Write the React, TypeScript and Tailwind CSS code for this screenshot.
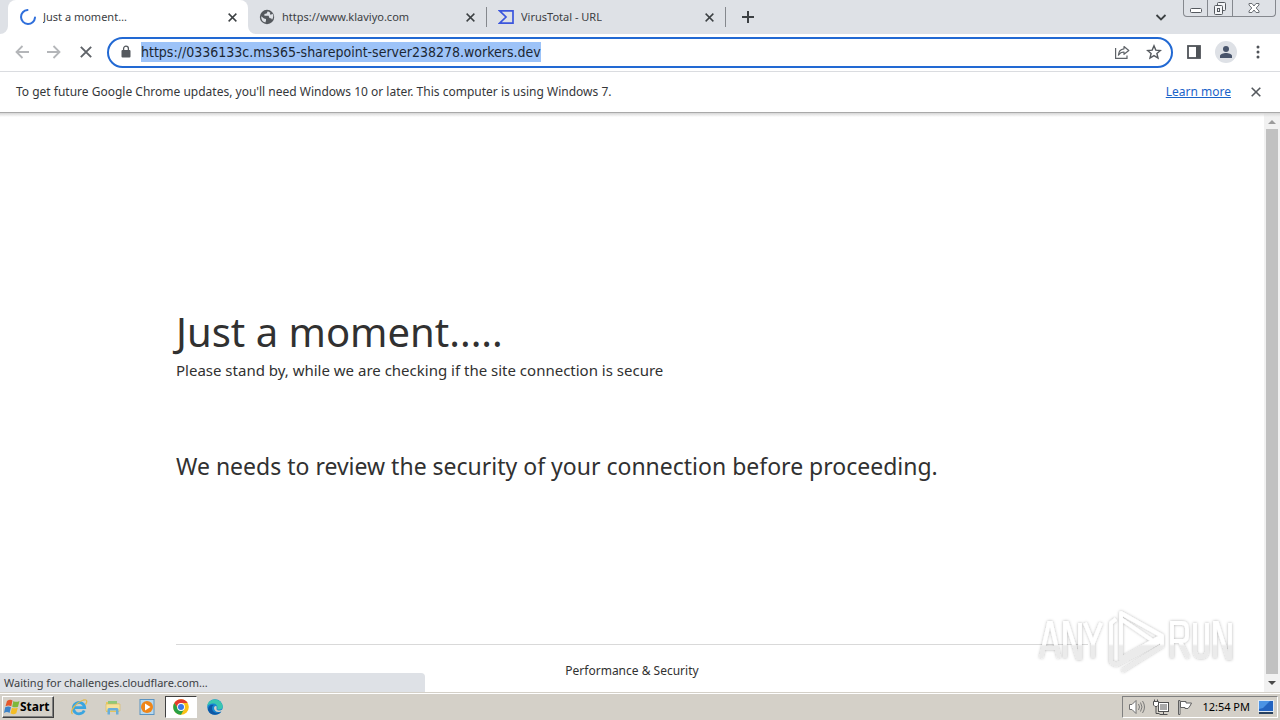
import React from "react";

type IconProps = { className?: string };

const Cross = ({ className = "" }: IconProps) => (
  <svg viewBox="0 0 10 10" className={className} fill="none" stroke="currentColor" strokeWidth="1.6" aria-hidden="true">
    <path d="M.7 .7 9.300 9.300M9.300 .7 .7 9.300" />
  </svg>
);

const Spinner = () => (
  <svg viewBox="0 0 16 16" className="size-4" fill="none" stroke="#2f6fdb" strokeWidth="2" strokeLinecap="round" aria-hidden="true">
    <path d="M7.5 1A7 7 0 1 0 15 8.6" />
  </svg>
);

const Globe = () => (
  <svg viewBox="0 0 16 16" className="size-4" aria-hidden="true">
    <circle cx="8" cy="8" r="7.2" fill="#54585d" />
    <path d="M2.2 7.2 5 9.6 7 10v1.6l-.6 1.8C3.6 12.8 2 10.6 2.2 7.2Z" fill="#dee1e6" />
    <path d="M8.8 2.2 7.6 4.4 5.4 5v1.8h4.2l.8 2.2 2 .4.6 1.4c1.4-1.800 1.700-4 .6-6l-1.800 1-1-.8.6-1.200Z" fill="#dee1e6" />
  </svg>
);

const VirusTotal = () => (
  <svg viewBox="0 0 16 16" className="size-4" fill="none" stroke="#3b56dd" strokeWidth="1.700" aria-hidden="true">
    <path d="M1.600 1.900H15v12.200H1.600L8 8Z" />
  </svg>
);

const tabs = [
  { title: "Just a moment…", icon: <Spinner />, active: true },
  { title: "https://www.klaviyo.com", icon: <Globe />, active: false },
  { title: "VirusTotal - URL", icon: <VirusTotal />, active: false },
];

function TabStrip() {
  return (
    <div className="flex h-[34px] bg-[#dee1e6] pl-2 text-[#3c4043]">
      <div role="tablist" className="flex">
        {tabs.map((t) => (
          <div
            key={t.title}
            className={
              t.active
                ? "relative flex w-60 items-center rounded-t-lg bg-white pl-3 pr-[11px]"
                : "flex w-[239px] items-center pl-[11px] pr-[10px]"
            }
          >
            {t.active && (
              <svg viewBox="0 0 256 8" className="absolute -left-2 bottom-0 h-2 w-64" fill="#fff" aria-hidden="true">
                <path d="M0 8A8 8 0 0 0 8 0V8ZM256 8A8 8 0 0 1 248 0V8Z" />
              </svg>
            )}
            <button role="tab" aria-selected={t.active} className="flex min-w-0 flex-1 items-center gap-[7px] text-left text-[11px] leading-4">
              {t.icon}
              <span className="truncate">{t.title}</span>
            </button>
            <button aria-label={"Close " + t.title} className="flex size-[9px] items-center justify-center">
              <Cross className="size-[9px]" />
            </button>
            {!t.active && <span className="ml-[11px] -mr-[10px] h-5 w-px bg-[#85888d]" />}
          </div>
        ))}
      </div>
      <button aria-label="New tab" className="ml-4 flex w-3 items-center">
        <svg viewBox="0 0 12 12" className="size-3" stroke="#3c4043" strokeWidth="2" aria-hidden="true">
          <path d="M6 0V12M0 6H12" />
        </svg>
      </button>
      <div className="ml-auto flex items-start pr-1">
        <button aria-label="Search tabs" className="mr-4 flex h-[34px] w-3 items-center">
          <svg viewBox="0 0 12 12" className="size-3" fill="none" stroke="#3c4043" strokeWidth="1.800" aria-hidden="true">
            <path d="M1.500 4 6 8.400 10.500 4" />
          </svg>
        </button>
        <div className="flex h-[17px] divide-x divide-[#85888e] rounded-b border border-t-0 border-[#85888e]">
          <button aria-label="Minimize" className="flex w-6 justify-center">
            <svg viewBox="0 0 12 16" className="h-4 w-3" fill="#fff" stroke="#55595f" aria-hidden="true">
              <rect x=".5" y="8.500" width="11" height="4" rx="1" />
            </svg>
          </button>
          <button aria-label="Restore" className="flex w-[25px] justify-center">
            <svg viewBox="0 0 14 16" className="h-4 w-[14px]" fill="#f4f5f7" stroke="#55595f" aria-hidden="true">
              <rect x="4.500" y="2.500" width="8" height="8" rx="1" />
              <rect x="1.500" y="5.500" width="8" height="9" rx="1" />
              <rect x="4.500" y="8.500" width="2" height="3" />
            </svg>
          </button>
          <button aria-label="Close" className="flex w-[42px] justify-center">
            <svg viewBox="0 0 12 16" className="h-4 w-3" fill="#fff" stroke="#6b6f75" strokeLinejoin="round" aria-hidden="true">
              <path d="M1 3.500H4L6 6 8 3.500H11V5L8.200 8 11 11V12.500H8L6 10 4 12.500H1V11L3.800 8 1 5Z" />
            </svg>
          </button>
        </div>
      </div>
    </div>
  );
}

const Arrow = ({ className = "" }: IconProps) => (
  <svg viewBox="0 0 14 14" className={"size-[14px] " + className} fill="none" stroke="#b4b6b9" strokeWidth="1.800" aria-hidden="true">
    <path d="M14 7H1.500M7.500 1 1.500 7 7.500 13" />
  </svg>
);

function Toolbar() {
  return (
    <div className="flex h-[38px] items-center border-b border-[#dadce0] bg-white pb-px pl-[15px] pr-4">
      <button aria-label="Back"><Arrow /></button>
      <button aria-label="Forward" className="ml-[18px]"><Arrow className="rotate-180" /></button>
      <button aria-label="Stop" className="ml-[19px] text-[#5f6368]"><Cross className="size-3" /></button>
      <form className="ml-[15px] flex h-[31px] flex-1 items-center rounded-full border-2 border-[#2269d3] pl-3 pr-[9px]">
        <svg viewBox="0 0 10 14" className="h-[14px] w-[10px]" aria-hidden="true">
          <rect x=".5" y="5" width="9" height="7.500" rx="1" fill="#55595e" />
          <path d="M2.600 5.500V3.600a2.400 2.400 0 0 1 4.800 0V5.500" fill="none" stroke="#55595e" strokeWidth="1.300" />
        </svg>
        <input
          aria-label="Address"
          defaultValue="https://0336133c.ms365-sharepoint-server238278.workers.dev"
          className="ml-[10px] h-5 field-sizing-content bg-[#9dc3f8] font-['DejaVu_Sans_Condensed','DejaVu_Sans',sans-serif] text-[14px] leading-5 text-[#1b2733] outline-none"
        />
        <button type="button" aria-label="Share" className="ml-auto">
          <svg viewBox="0 0 16 16" className="size-4" fill="none" stroke="#5f6368" strokeWidth="1.200" aria-hidden="true">
            <path d="M1.600 4V14.400H13V11.500" />
            <path d="M10 2.500 14.800 6.500 10 10.300V8C7.500 8 5.800 9 4.400 11.200 4.600 7.400 6.800 5.200 10 4.800Z" strokeLinejoin="round" />
          </svg>
        </button>
        <button type="button" aria-label="Bookmark" className="ml-4">
          <svg viewBox="0 0 16 16" className="size-4" fill="none" stroke="#55595e" strokeWidth="1.400" aria-hidden="true">
            <path d="M8 1.800 9.800 6.100 14.400 6.500 10.900 9.500 12 14 8 11.600 4 14 5.100 9.500 1.600 6.500 6.200 6.100Z" />
          </svg>
        </button>
      </form>
      <button aria-label="Side panel" className="ml-[14px]">
        <svg viewBox="0 0 14 14" className="size-[14px]" aria-hidden="true">
          <rect x="1" y="1" width="12" height="12" fill="none" stroke="#4f5358" strokeWidth="1.800" />
          <rect x="9" y="1" width="4" height="12" fill="#4f5358" />
        </svg>
      </button>
      <button aria-label="Profile" className="ml-[14px] flex size-[22px] items-center justify-center rounded-full bg-[#dee1e6]">
        <svg viewBox="0 0 14 14" className="size-[14px]" fill="#48546b" aria-hidden="true">
          <circle cx="7" cy="4" r="3" />
          <path d="M1 13V11C1 9 4.500 8 7 8S13 9 13 11V13Z" />
        </svg>
      </button>
      <button aria-label="Menu" className="ml-[15px]">
        <svg viewBox="0 0 12 14" className="h-[14px] w-3" fill="#4f5358" aria-hidden="true">
          <circle cx="6" cy="2" r="1.500" />
          <circle cx="6" cy="7" r="1.500" />
          <circle cx="6" cy="12" r="1.500" />
        </svg>
      </button>
    </div>
  );
}

function InfoBar() {
  return (
    <div className="flex h-10 items-center bg-white pl-4 pr-[19px] text-[12px] leading-4 text-[#35373a]">
      <p>To get future Google Chrome updates, you'll need Windows 10 or later. This computer is using Windows 7.</p>
      <a href="#update" className="ml-auto text-[#1a63c9] underline">Learn more</a>
      <button aria-label="Dismiss" className="ml-5 text-[#55595e]"><Cross className="size-[10px]" /></button>
    </div>
  );
}

function Watermark() {
  return (
    <svg viewBox="0 0 216 72" className="pointer-events-none absolute bottom-[15px] right-9 h-[72px] w-[216px]" role="img" aria-label="ANY RUN">
      <defs>
        <filter id="halo" x="-10%" y="-20%" width="120%" height="140%">
          <feDropShadow dx="0" dy="0" stdDeviation="1.700" floodColor="#000" floodOpacity=".3" />
        </filter>
        <linearGradient id="fade" gradientUnits="userSpaceOnUse" x1="0" y1="0" x2="0" y2="72">
          <stop offset=".54" stopColor="#fff" />
          <stop offset=".57" stopColor="#ebebeb" />
        </linearGradient>
      </defs>
      <g filter="url(#halo)" fill="none" stroke="url(#fade)" strokeWidth="3.800">
        <path d="M13 53 21 18H23L31 53M15 43H29M37 53V18H39L50 53H52V18M57 18 65 38V53M73 18 65 38" />
        <path d="M144 53V18H154Q159 18 159 24V31Q159 36 154 36H144M152 36 160 53M167 18V46Q167 52 173 52T179 46V18M187 53V18H189L200 53H202V18" />
        <path d="M83 58V18L88 14M88 60 83 57M93 44V8L134 31 93 54V44M93 14 128 38M88 60 134 35M94 66 134 41V31" strokeLinejoin="round" />
      </g>
    </svg>
  );
}

function Page() {
  return (
    <div className="relative flex flex-1 border-t border-[#a9a9a9] bg-white">
      <div className="pointer-events-none absolute inset-x-0 top-0 h-1 bg-linear-to-b from-[#d6d6d6] to-transparent" />
      <main className="flex-1 text-[#313131]">
        <div className="mx-auto flex h-full max-w-[912px] flex-col">
          <h1 className="pt-[192px] text-[40px] leading-[54px]">Just a moment.....</h1>
          <p className="text-[15px] leading-[22px]">Please stand by, while we are checking if the site connection is secure</p>
          <h2 className="mt-[67px] text-[23px] leading-9">We needs to review the security of your connection before proceeding.</h2>
          <footer className="mt-auto mb-[13px] border-t border-[#d9d9d9] pt-[18px] text-center text-[12px] leading-4">
            Performance &amp; Security
          </footer>
        </div>
      </main>
      <div className="flex w-4 flex-col items-center bg-[#f1f1f1]" aria-hidden="true">
        <svg viewBox="0 0 16 16" className="size-4" fill="#9b9b9b"><path d="M4 11 8 7 12 11Z" /></svg>
        <div className="w-3 flex-1 bg-[#c1c1c1]" />
        <svg viewBox="0 0 16 18" className="h-[18px] w-4" fill="#4a4a4a"><path d="M4 7H12L8 11Z" /></svg>
      </div>
      <Watermark />
      <p className="absolute bottom-0 left-0 flex h-[19px] w-[425px] items-center rounded-tr bg-[#dee1e6] pl-1 text-[11px] leading-4 text-[#3c4043]">
        Waiting for challenges.cloudflare.com…
      </p>
    </div>
  );
}

const IeIcon = () => (
  <svg viewBox="0 0 18 18" className="size-[18px]" fill="none" aria-hidden="true">
    <path d="M14.200 12.500A5.700 5.700 0 1 1 14.700 9.700H4.500" stroke="#3aa5e0" strokeWidth="2.800" />
    <path d="M2.500 16C-1 13.500 6 4.500 13.500 2 18 1 17 4.500 15.500 6.500" stroke="#dfb951" strokeWidth="1.300" />
  </svg>
);

const FolderIcon = () => (
  <svg viewBox="0 0 18 18" className="size-[18px]" aria-hidden="true">
    <path d="M2 4H8L9 5.500H15V14H2Z" fill="#e8c860" />
    <path d="M4 3H13V8H4Z" fill="#8fc878" />
    <path d="M2 6H16V13H2Z" fill="#f6e19a" stroke="#d9b85b" strokeWidth=".6" />
    <path d="M3.500 16.500V11.500Q3.500 10 5 10H13Q14.500 10 14.500 11.500V16.500H12V12.500H6V16.500Z" fill="#69aeda" />
  </svg>
);

const PlayerIcon = () => (
  <svg viewBox="0 0 18 18" className="size-[18px]" aria-hidden="true">
    <rect x="2" y="1.500" width="14" height="15" fill="#b7d8ee" stroke="#5b94c2" />
    <circle cx="9" cy="9" r="6" fill="#ef8518" />
    <path d="M7 5.500 12.500 9 7 12.500Z" fill="#fff" />
  </svg>
);

const ChromeIcon = () => (
  <svg viewBox="0 0 16 16" className="size-4" aria-hidden="true">
    <circle cx="8" cy="8" r="7.800" fill="#fbc116" />
    <path d="M1.250 4.100A7.800 7.800 0 0 1 14.750 4.100H8L5 9.500Z" fill="#e33b2e" />
    <path d="M1.250 4.100A7.800 7.800 0 0 0 8 15.800L11.200 9.900 5 9.500Z" fill="#29a045" />
    <circle cx="8" cy="8" r="3.900" fill="#fff" />
    <circle cx="8" cy="8" r="3" fill="#3a78e7" />
  </svg>
);

const EdgeIcon = () => (
  <svg viewBox="0 0 16 16" className="size-4" aria-hidden="true">
    <circle cx="8" cy="8" r="7.800" fill="#1787d2" />
    <path d="M.3 7C1-1.500 14-2 15.700 7 16 10 13 11 10 10.500 11.500 7 9 4 6 4.500 3 4.500 1 6 .3 7Z" fill="#3ac6b0" />
    <path d="M5 9C5 13 9 15 14 13 11 17 3 17 1 11 1 7 4 5 7 6 5.500 6.500 5 8 5 9Z" fill="#0d57a5" />
    <path d="M9.500 7.500C10 9 9 10 10 11 12 12 14.500 11.500 16 10V12L14 12.500C10 14 7 12 7 9 7 7.500 9 6.500 9.500 7.500Z" fill="#d4d0c8" />
  </svg>
);

const quickLaunch = [
  { name: "Internet Explorer", icon: <IeIcon />, active: false },
  { name: "Explorer", icon: <FolderIcon />, active: false },
  { name: "Media Player", icon: <PlayerIcon />, active: false },
  { name: "Chrome", icon: <ChromeIcon />, active: true },
  { name: "Edge", icon: <EdgeIcon />, active: false },
];

function Taskbar() {
  return (
    <div className="flex h-7 items-center border-t border-[#d4d0c8] bg-[#d4d0c8] px-[2px] shadow-[inset_0_1px_0_#fff]">
      <button className="mt-px flex h-[22px] w-[52px] items-center border border-white border-b-[#404040] border-r-[#404040] pl-px text-[12px] font-bold leading-4 text-black shadow-[inset_-1px_-1px_0_#808080]">
        <svg viewBox="0 0 16 16" className="size-4 shrink-0" aria-hidden="true">
          <path d="M3 2Q6 0 8.500 1.500L7.300 7.300Q4.500 5.500 1.500 7.300Z" fill="#e4572b" />
          <path d="M9.400 2Q12 3.700 15.500 2L14 7.700Q11 9 8.200 7.700Z" fill="#7db83a" />
          <path d="M1.200 8.300Q4.500 6.500 7 8.300L5.500 14Q3 12 0 14Z" fill="#3c83c9" />
          <path d="M8 8.700Q10.500 10 13.800 8.700L12.300 14.300Q9.500 16 6.500 14.300Z" fill="#f4bd26" />
        </svg>
        Start
      </button>
      <nav aria-label="Quick launch" className="ml-[9px] flex items-center gap-[2px]">
        {quickLaunch.map((q) => (
          <button
            key={q.name}
            aria-label={q.name}
            className={
              q.active
                ? "flex h-[22px] w-8 items-center justify-center border border-white border-l-[#404040] border-t-[#404040] bg-white"
                : "flex h-[22px] w-8 items-center justify-center"
            }
          >
            {q.icon}
          </button>
        ))}
      </nav>
      <div className="ml-auto flex h-[22px] items-center border border-white border-l-[#808080] border-t-[#808080] pl-[5px] pr-[3px] text-[11px] leading-4 text-black">
        <svg viewBox="0 0 18 18" className="size-[18px]" fill="#fff" stroke="#707070" aria-hidden="true">
          <path d="M1.500 6.500H4L8 2.500V15.500L4 11.500H1.500Z" />
          <path d="M10.500 6Q12.500 9 10.500 12M12.500 4.500Q15.500 9 12.500 13.500M14.500 3Q18.500 9 14.500 15" fill="none" strokeWidth=".9" />
        </svg>
        <svg viewBox="0 0 18 18" className="ml-[6px] size-[18px]" fill="#fff" stroke="#505050" aria-hidden="true">
          <rect x="6.500" y="4.500" width="10" height="9" />
          <path d="M8 6H15V12H8Z" fill="#a9a9a9" stroke="none" />
          <path d="M7.500 16.500H15.500M11.500 13.500V16M4 8V15.500H7.500" fill="none" />
          <path d="M1.500 3.500H6.500V7L5 8.500H3L1.500 7ZM2.500 3.500V1.500M5.500 3.500V1.500" />
        </svg>
        <svg viewBox="0 0 18 18" className="ml-[6px] size-[18px]" fill="#fff" stroke="#606060" aria-hidden="true">
          <path d="M2.500 2.500H4V16.500H2.500ZM4.500 3.500H10V5H15.500L14 8 12 10.500H9V9.500H4.500Z" />
        </svg>
        <time className="ml-2">12:54 PM</time>
        <svg viewBox="0 0 16 14" className="ml-2 h-[14px] w-4" aria-hidden="true">
          <rect x=".5" y=".5" width="15" height="11" fill="#2464c0" stroke="#dfe8f2" />
          <path d="M1 1H12L5 8 1 9Z" fill="#4b93e4" />
          <path d="M1 12H15V14H1Z" fill="#27405f" />
        </svg>
      </div>
    </div>
  );
}

export default function App() {
  return (
    <div className="flex min-h-screen flex-col overflow-hidden bg-white font-['Noto_Sans',sans-serif]">
      <TabStrip />
      <Toolbar />
      <InfoBar />
      <Page />
      <Taskbar />
    </div>
  );
}
